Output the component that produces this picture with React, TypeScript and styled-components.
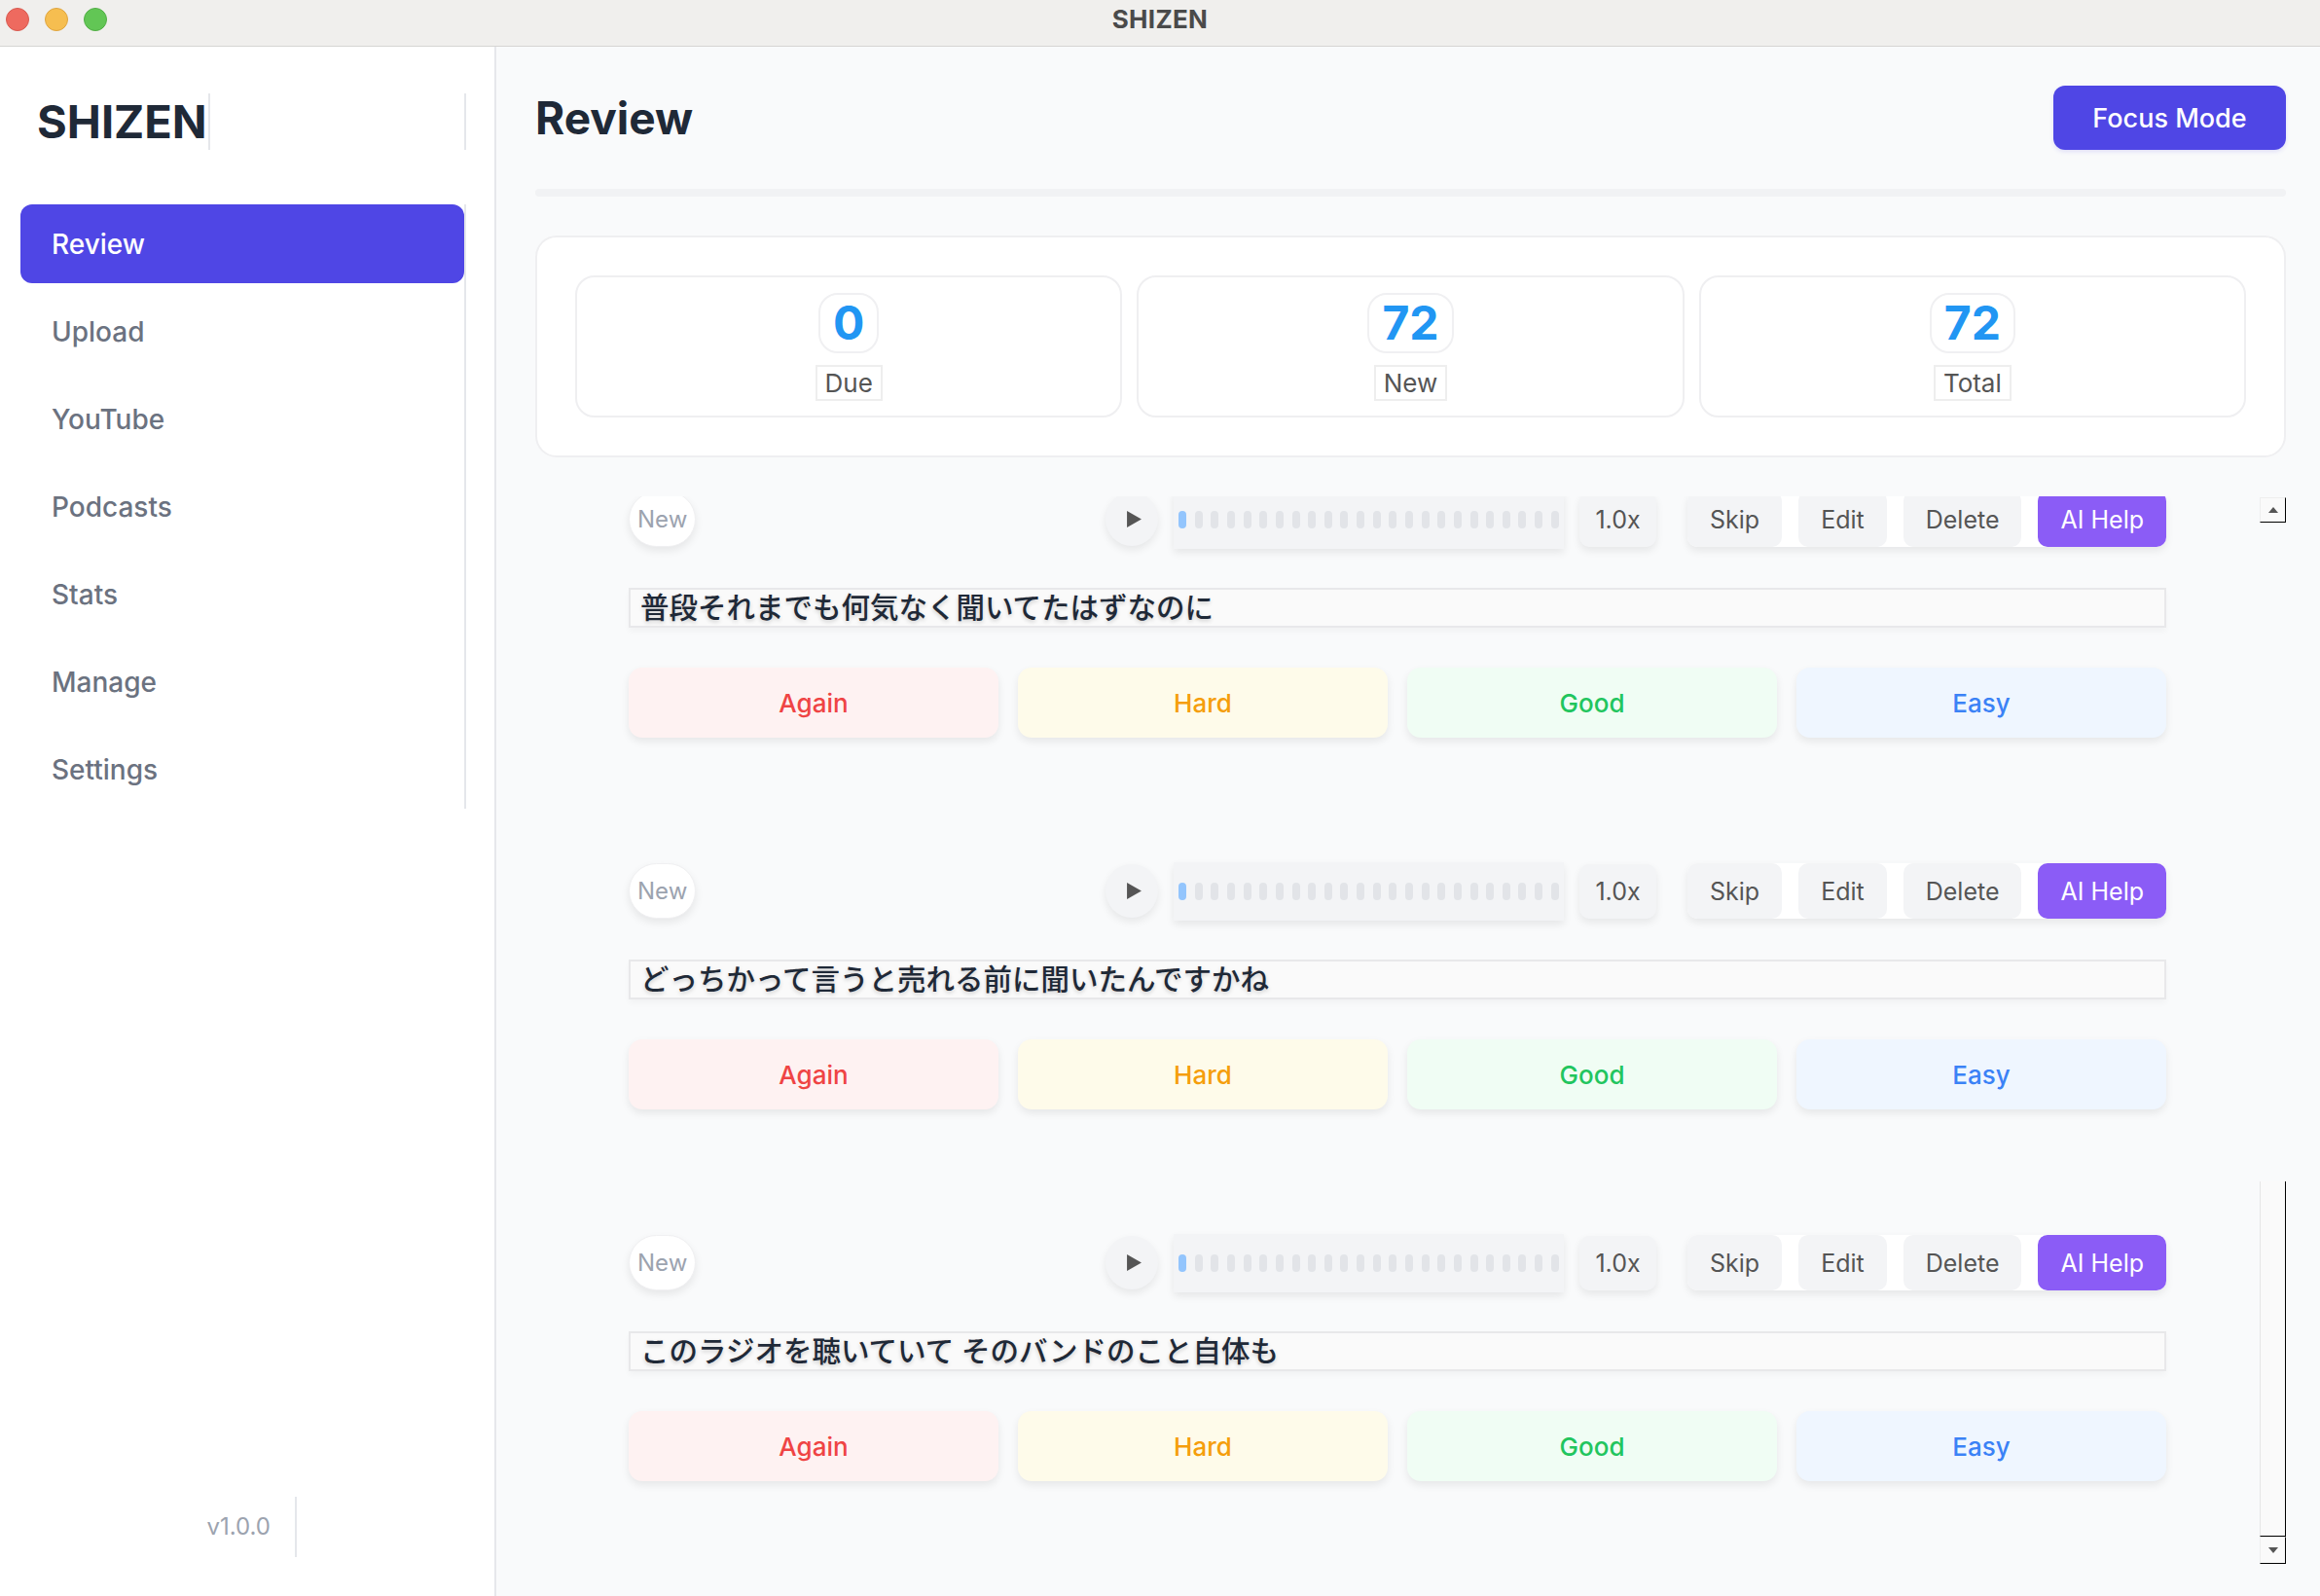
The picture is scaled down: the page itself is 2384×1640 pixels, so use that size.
import React from "react";
import styled, { createGlobalStyle } from "styled-components";

const GlobalStyle = createGlobalStyle`
  html, body, #root {
    margin: 0;
    padding: 0;
    height: 100%;
  }
  body {
    font-family: Inter, "Noto Sans", "Noto Sans CJK JP", sans-serif;
    color: #1f2937;
    overflow: hidden;
  }
  * {
    box-sizing: border-box;
  }
`;

const Window = styled.div`
  width: 100vw;
  height: 100vh;
  display: flex;
  flex-direction: column;
  background: #ffffff;
`;

const TitleBar = styled.div`
  height: 48px;
  flex: none;
  display: grid;
  grid-template-columns: 1fr auto 1fr;
  align-items: center;
  padding: 0 6px 8px;
  background: #f0efed;
  border-bottom: 1px solid #d6d5d3;
`;

const Lights = styled.div`
  display: flex;
  gap: 16px;
`;

const Light = styled.span<{ $color: string; $edge: string }>`
  width: 24px;
  height: 24px;
  border-radius: 50%;
  background: ${(p) => p.$color};
  border: 1px solid ${(p) => p.$edge};
`;

const WindowTitle = styled.div`
  font-size: 26px;
  font-weight: 700;
  color: #4a4a4a;
  letter-spacing: 0.3px;
`;

const Body = styled.div`
  flex: 1;
  display: flex;
  min-height: 0;
`;

const Sidebar = styled.aside`
  width: 510px;
  flex: none;
  display: flex;
  flex-direction: column;
  padding: 48px 0 40px 21px;
  background: #ffffff;
  border-right: 2px solid #e6e7eb;
`;

const LogoRow = styled.div`
  width: 458px;
  height: 58px;
  padding-left: 17px;
  border-right: 2px solid #e5e7eb;
`;

const Logo = styled.span`
  display: inline-block;
  height: 58px;
  line-height: 58px;
  font-size: 47px;
  font-weight: 700;
  color: #1f2937;
  padding-right: 1px;
  border-right: 2px solid #e5e7eb;
`;

const Nav = styled.nav`
  width: 458px;
  margin-top: 56px;
  display: flex;
  flex-direction: column;
  gap: 9px;
  border-right: 2px solid #e5e7eb;
`;

const NavItem = styled.div<{ $active?: boolean }>`
  height: 81px;
  display: flex;
  align-items: center;
  padding-left: 32px;
  border-radius: 12px;
  font-size: 28px;
  font-weight: 500;
  color: ${(p) => (p.$active ? "#ffffff" : "#6b7280")};
  background: ${(p) => (p.$active ? "#4f46e5" : "transparent")};
`;

const Spacer = styled.div`
  flex: 1;
`;

const Version = styled.div`
  width: 284px;
  height: 62px;
  line-height: 62px;
  text-align: right;
  padding-right: 25px;
  font-size: 24px;
  color: #9ca3af;
  border-right: 2px solid #e5e7eb;
`;

const Main = styled.main`
  flex: 1;
  min-width: 0;
  display: flex;
  flex-direction: column;
  padding: 40px 35px 33px 40px;
  background: #f9fafb;
`;

const Header = styled.div`
  height: 66px;
  display: flex;
  align-items: center;
  justify-content: space-between;
`;

const PageTitle = styled.h1`
  margin: 0;
  font-size: 46px;
  font-weight: 700;
  line-height: 66px;
  color: #1f2937;
`;

const FocusButton = styled.button`
  width: 239px;
  height: 66px;
  border: none;
  border-radius: 12px;
  background: #4f46e5;
  color: #ffffff;
  font-family: inherit;
  font-size: 27px;
  font-weight: 500;
  box-shadow: 0 2px 4px rgba(79, 70, 229, 0.15);
`;

const ProgressTrack = styled.div`
  margin-top: 40px;
  height: 8px;
  border-radius: 4px;
  background: #f1f2f4;
`;

const StatsPanel = styled.section`
  margin-top: 40px;
  display: grid;
  grid-template-columns: repeat(3, 1fr);
  gap: 15px;
  padding: 39px;
  background: #ffffff;
  border: 2px solid #efeff1;
  border-radius: 22px;
`;

const StatCard = styled.div`
  height: 146px;
  display: flex;
  flex-direction: column;
  align-items: center;
  justify-content: center;
  gap: 12px;
  border: 2px solid #efeff1;
  border-radius: 20px;
  background: #ffffff;
`;

const StatNumber = styled.div`
  height: 62px;
  line-height: 58px;
  padding: 0 13px;
  border: 2px solid #f0f0f2;
  border-radius: 20px;
  font-size: 48px;
  font-weight: 700;
  color: #2196f3;
`;

const StatLabel = styled.div`
  line-height: 33px;
  padding: 0 8px;
  border: 2px solid #eeeeee;
  font-size: 26px;
  color: #555555;
`;

const ListViewport = styled.div`
  margin-top: 40px;
  flex: 1;
  min-height: 0;
  display: flex;
`;

const ListClip = styled.div`
  flex: 1;
  min-width: 0;
  overflow: hidden;
  padding: 0 96px;
`;

const CardList = styled.div`
  margin-top: -5px;
  display: flex;
  flex-direction: column;
  gap: 129px;
`;

const ReviewCard = styled.article`
  display: flex;
  flex-direction: column;
`;

const TopRow = styled.div`
  height: 57px;
  display: flex;
  align-items: center;
  justify-content: space-between;
`;

const NewPill = styled.span`
  height: 57px;
  display: flex;
  align-items: center;
  padding: 0 8px;
  border-radius: 999px;
  background: #ffffff;
  border: 1px solid #f0f0f2;
  box-shadow: 0 4px 8px rgba(0, 0, 0, 0.08);
  font-size: 24px;
  color: #9ca3af;
`;

const Controls = styled.div`
  display: flex;
  align-items: center;
  gap: 32px;
`;

const Player = styled.div`
  display: flex;
  align-items: center;
  gap: 16px;
`;

const PlayButton = styled.button`
  width: 54px;
  height: 55px;
  border: none;
  border-radius: 50%;
  background: #f3f4f6;
  display: flex;
  align-items: center;
  justify-content: center;
  padding: 0 0 0 4px;
  box-shadow: 0 4px 8px rgba(0, 0, 0, 0.08);
`;

const Wave = styled.div`
  width: 401px;
  height: 60px;
  display: flex;
  align-items: center;
  justify-content: space-between;
  padding: 0 5px;
  background: #f3f4f6;
  box-shadow: 0 4px 8px rgba(0, 0, 0, 0.08);
`;

const WaveBar = styled.span<{ $played?: boolean }>`
  width: 8px;
  height: 18px;
  border-radius: 4px;
  background: ${(p) => (p.$played ? "#93c5fd" : "#e2e4e8")};
`;

const SpeedButton = styled.button`
  width: 79px;
  height: 56px;
  border: none;
  border-radius: 10px;
  background: #f3f4f6;
  font-family: inherit;
  font-size: 25px;
  color: #555555;
  box-shadow: 0 4px 8px rgba(0, 0, 0, 0.08);
`;

const Actions = styled.div`
  height: 57px;
  display: flex;
  gap: 17px;
  border-radius: 10px;
  background: #ffffff;
  box-shadow: 0 4px 8px rgba(0, 0, 0, 0.08);
`;

const ActionButton = styled.button<{ $primary?: boolean }>`
  height: 57px;
  padding: 0 23px;
  border: none;
  border-radius: 10px;
  font-family: inherit;
  font-size: 25px;
  background: ${(p) => (p.$primary ? "#8b5cf6" : "#f3f4f6")};
  color: ${(p) => (p.$primary ? "#ffffff" : "#555555")};
`;

const Sentence = styled.div`
  margin-top: 42px;
  height: 41px;
  padding: 0 10px;
  line-height: 37px;
  border: 2px solid #e8e8ea;
  background: #fafafa;
  box-shadow: 0 4px 6px rgba(0, 0, 0, 0.03);
  font-family: Inter, "Noto Sans CJK JP", sans-serif;
  font-size: 29.5px;
  font-weight: 500;
  color: #1f2937;
  text-shadow: 0 2px 4px rgba(0, 0, 0, 0.18);
  white-space: nowrap;
`;

const Ratings = styled.div`
  margin-top: 41px;
  display: grid;
  grid-template-columns: repeat(4, 1fr);
  gap: 20px;
`;

const RateButton = styled.button<{ $bg: string; $fg: string }>`
  height: 72px;
  border: none;
  border-radius: 14px;
  background: ${(p) => p.$bg};
  color: ${(p) => p.$fg};
  font-family: inherit;
  font-size: 26px;
  font-weight: 500;
  box-shadow: 0 4px 8px rgba(0, 0, 0, 0.08);
`;

const ScrollBar = styled.div`
  width: 27px;
  flex: none;
  margin-top: 1px;
  display: flex;
  flex-direction: column;
`;

const ScrollArrow = styled.div<{ $h: number }>`
  height: ${(p) => p.$h}px;
  flex: none;
  display: flex;
  align-items: center;
  justify-content: center;
  background: #fafafa;
  border-left: 1px solid #eeeeee;
  border-top: 1px solid #eeeeee;
  border-right: 1px solid #000000;
  border-bottom: 1px solid #000000;
`;

const ScrollTrack = styled.div`
  flex: 1;
  display: flex;
  flex-direction: column;
  justify-content: flex-end;
`;

const ScrollThumb = styled.div`
  height: 365px;
  border-left: 1px solid #e6e6e6;
  border-right: 1px solid #000000;
  border-bottom: 1px solid #000000;
  background: #fafafa;
`;

const navItems = ["Review", "Upload", "YouTube", "Podcasts", "Stats", "Manage", "Settings"];

const stats = [
  { value: "0", label: "Due" },
  { value: "72", label: "New" },
  { value: "72", label: "Total" },
];

const cards = [
  "普段それまでも何気なく聞いてたはずなのに",
  "どっちかって言うと売れる前に聞いたんですかね",
  "このラジオを聴いていて そのバンドのこと自体も",
];

const ratings = [
  { label: "Again", bg: "#fef2f2", fg: "#ef4444" },
  { label: "Hard", bg: "#fefbea", fg: "#f59e0b" },
  { label: "Good", bg: "#f0fdf4", fg: "#22c55e" },
  { label: "Easy", bg: "#eff6ff", fg: "#3b82f6" },
];

const bars = Array.from({ length: 24 }, (_, i) => i);

function Triangle({ up }: { up: boolean }) {
  return (
    <svg width="10" height="6" viewBox="0 0 10 6">
      <path d={up ? "M0 6 L5 0 L10 6 Z" : "M0 0 L5 6 L10 0 Z"} fill="#555555" />
    </svg>
  );
}

export default function App() {
  return (
    <Window>
      <GlobalStyle />
      <TitleBar>
        <Lights>
          <Light $color="#ee6a5f" $edge="#d85a50" />
          <Light $color="#f6be50" $edge="#dfa53f" />
          <Light $color="#62c655" $edge="#50ae45" />
        </Lights>
        <WindowTitle>SHIZEN</WindowTitle>
        <div />
      </TitleBar>
      <Body>
        <Sidebar>
          <LogoRow>
            <Logo>SHIZEN</Logo>
          </LogoRow>
          <Nav>
            {navItems.map((item) => (
              <NavItem key={item} $active={item === "Review"}>
                {item}
              </NavItem>
            ))}
          </Nav>
          <Spacer />
          <Version>v1.0.0</Version>
        </Sidebar>
        <Main>
          <Header>
            <PageTitle>Review</PageTitle>
            <FocusButton>Focus Mode</FocusButton>
          </Header>
          <ProgressTrack />
          <StatsPanel>
            {stats.map((s) => (
              <StatCard key={s.label}>
                <StatNumber>{s.value}</StatNumber>
                <StatLabel>{s.label}</StatLabel>
              </StatCard>
            ))}
          </StatsPanel>
          <ListViewport>
            <ListClip>
              <CardList>
                {cards.map((text) => (
                  <ReviewCard key={text}>
                    <TopRow>
                      <NewPill>New</NewPill>
                      <Controls>
                        <Player>
                          <PlayButton>
                            <svg width="15" height="17" viewBox="0 0 14 16">
                              <path d="M0 0 L14 8 L0 16 Z" fill="#555555" />
                            </svg>
                          </PlayButton>
                          <Wave>
                            {bars.map((b) => (
                              <WaveBar key={b} $played={b === 0} />
                            ))}
                          </Wave>
                          <SpeedButton>1.0x</SpeedButton>
                        </Player>
                        <Actions>
                          <ActionButton>Skip</ActionButton>
                          <ActionButton>Edit</ActionButton>
                          <ActionButton>Delete</ActionButton>
                          <ActionButton $primary>AI Help</ActionButton>
                        </Actions>
                      </Controls>
                    </TopRow>
                    <Sentence>{text}</Sentence>
                    <Ratings>
                      {ratings.map((r) => (
                        <RateButton key={r.label} $bg={r.bg} $fg={r.fg}>
                          {r.label}
                        </RateButton>
                      ))}
                    </Ratings>
                  </ReviewCard>
                ))}
              </CardList>
            </ListClip>
            <ScrollBar>
              <ScrollArrow $h={26}>
                <Triangle up />
              </ScrollArrow>
              <ScrollTrack>
                <ScrollThumb />
              </ScrollTrack>
              <ScrollArrow $h={28}>
                <Triangle up={false} />
              </ScrollArrow>
            </ScrollBar>
          </ListViewport>
        </Main>
      </Body>
    </Window>
  );
}
